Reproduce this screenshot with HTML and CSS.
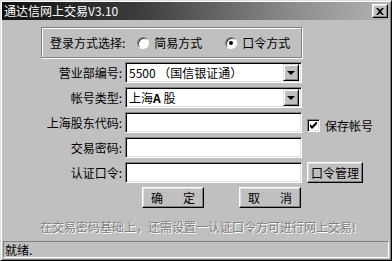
FILE: index.html
```html
<!DOCTYPE html>
<html lang="zh-CN">
<head>
    <meta charset="UTF-8">
    <title>通达信网上交易V3.10</title>
    <link rel="stylesheet" href="styles.css">
</head>
<body>
    <div class="window">
        <div class="titlebar">
            <span class="title">通达信网上交易V3.10</span>
            <span class="close">
                <svg width="8" height="7" viewBox="0 0 8 7">
                    <path d="M0 0h2l2 2 2-2h2L5 3.5 8 7H6L4 5 2 7H0l3-3.5z" fill="#000"/>
                </svg>
            </span>
        </div>

        <div class="content">
            <!-- Login mode -->
            <div class="group">
                <span class="group-label">登录方式选择:</span>
                <span class="option first"><span class="radio"></span>简易方式</span>
                <span class="option second"><span class="radio checked"></span>口令方式</span>
            </div>

            <div class="form">
                <span class="label">营业部编号:</span>
                <div class="field combo">
                    <span class="value">5500 （国信银证通）</span>
                    <span class="drop"></span>
                </div>
                <span></span>

                <span class="label">帐号类型:</span>
                <div class="field combo">
                    <span class="value">上海<b class="bold-a">A</b> 股</span>
                    <span class="drop"></span>
                </div>
                <span></span>

                <span class="label">上海股东代码:</span>
                <div class="field"></div>
                <span class="save">
                    <span class="checkbox">
                        <svg width="7" height="7" viewBox="0 0 7 7">
                            <path d="M0 2v3l2 2 5-5V-1L2 4z" fill="#000"/>
                        </svg>
                    </span>
                    保存帐号
                </span>

                <span class="label">交易密码:</span>
                <div class="field"></div>
                <span></span>

                <span class="label">认证口令:</span>
                <div class="field"></div>
                <span class="extra"><button class="btn small">口令管理</button></span>
            </div>

            <div class="actions">
                <button class="btn wide"><span>确</span><span>定</span></button>
                <button class="btn wide"><span>取</span><span>消</span></button>
            </div>

            <p class="hint">在交易密码基础上，还需设置一认证口令方可进行网上交易!</p>
        </div>

        <div class="status">就绪.</div>
    </div>
</body>
</html>
```

FILE: styles.css
```css
html {
    background-color: #c0c0c0;
}

body {
    margin: 0;
    font-family: "Noto Sans CJK SC", "DejaVu Sans", sans-serif;
    font-size: 12px;
    color: #000;
}

.window {
    width: 392px;
    height: 261px;
    box-sizing: border-box;
    background-color: #c0c0c0;
    border: 1px solid;
    border-color: #dfdfdf #000 #000 #dfdfdf;
    box-shadow: inset 1px 1px #fff, inset -1px -1px #808080;
    padding: 1px;
    display: flex;
    flex-direction: column;
}

.titlebar {
    height: 18px;
    background: linear-gradient(to right, #101010, #3c3c3c 35%, #8c8c8c 75%, #b4b4b4);
    display: flex;
    align-items: center;
    justify-content: space-between;
    padding: 0 2px 0 2px;
}

.title {
    color: #fff;
    font-size: 12px;
    line-height: 18px;
}

.close {
    width: 16px;
    height: 14px;
    box-sizing: border-box;
    background-color: #c0c0c0;
    border: 1px solid;
    border-color: #fff #000 #000 #fff;
    box-shadow: inset -1px -1px #808080, inset 1px 1px #dfdfdf;
    display: flex;
    align-items: center;
    justify-content: center;
}

.close svg {
    display: block;
}

.content {
    flex: 1;
}

/* Login mode group box */
.group {
    margin: 7px 0 0 39px;
    width: 261px;
    height: 31px;
    box-sizing: border-box;
    border: 1px solid #808080;
    box-shadow: inset 1px 1px #fff, 1px 1px #fff;
    display: flex;
    align-items: center;
    padding-left: 8px;
}

.option {
    display: flex;
    align-items: center;
    gap: 5px;
}

.option.first {
    margin-left: 12px;
}

.option.second {
    margin-left: 23px;
}

.radio {
    width: 12px;
    height: 12px;
    box-sizing: border-box;
    border-radius: 50%;
    background-color: #fff;
    border: 1px solid;
    border-color: #808080 #fff #fff #808080;
    box-shadow: inset 1px 1px #404040;
    display: flex;
    align-items: center;
    justify-content: center;
}

.radio.checked::after {
    content: "";
    width: 4px;
    height: 4px;
    border-radius: 50%;
    background-color: #000;
}

/* Form rows */
.form {
    margin-top: 4px;
    display: grid;
    grid-template-columns: 123px 177px 1fr;
    grid-auto-rows: 21px;
    row-gap: 4px;
}

.label {
    text-align: right;
    padding-right: 3px;
    line-height: 21px;
}

.field {
    background-color: #fff;
    box-sizing: border-box;
    border: 1px solid;
    border-color: #808080 #fff #fff #808080;
    box-shadow: inset 1px 1px #000, inset -1px -1px #dfdfdf;
    display: flex;
    align-items: center;
}

.combo .value {
    flex: 1;
    padding-left: 3px;
    white-space: nowrap;
}

.bold-a {
    font-weight: bold;
}

.drop {
    width: 16px;
    height: 17px;
    margin-right: 2px;
    box-sizing: border-box;
    background-color: #c0c0c0;
    border: 1px solid;
    border-color: #dfdfdf #000 #000 #dfdfdf;
    box-shadow: inset 1px 1px #fff, inset -1px -1px #808080;
    display: flex;
    align-items: center;
    justify-content: center;
}

.drop::after {
    content: "";
    border-left: 4px solid transparent;
    border-right: 4px solid transparent;
    border-top: 4px solid #000;
    margin-top: 1px;
}

.save {
    margin-left: 5px;
    padding-top: 5px;
    display: flex;
    align-items: center;
    gap: 5px;
}

.checkbox {
    width: 13px;
    height: 13px;
    box-sizing: border-box;
    background-color: #fff;
    border: 1px solid;
    border-color: #808080 #fff #fff #808080;
    box-shadow: inset 1px 1px #000, inset -1px -1px #dfdfdf;
    display: flex;
    align-items: center;
    justify-content: center;
}

.checkbox svg {
    display: block;
}

.extra {
    margin-left: 5px;
}

/* Buttons */
.btn {
    font-family: inherit;
    font-size: 12px;
    color: #000;
    background-color: #c0c0c0;
    box-sizing: border-box;
    height: 21px;
    padding: 0;
    border: 1px solid;
    border-color: #fff #000 #000 #fff;
    box-shadow: inset -1px -1px #808080, inset 1px 1px #dfdfdf;
    display: flex;
    align-items: center;
    justify-content: center;
}

.btn.small {
    width: 56px;
}

.btn.wide {
    width: 62px;
    gap: 20px;
}

.actions {
    margin: 4px 0 0 140px;
    display: flex;
    gap: 35px;
}

.hint {
    margin: 12px 0 0 0;
    text-align: center;
    line-height: 14px;
    color: #808080;
    text-shadow: 1px 1px #fff;
    padding-left: 4px;
}

.status {
    height: 17px;
    margin: 0 1px 1px 1px;
    box-sizing: border-box;
    border: 1px solid;
    border-color: #808080 #fff #fff #808080;
    line-height: 15px;
    padding-left: 1px;
}
```
